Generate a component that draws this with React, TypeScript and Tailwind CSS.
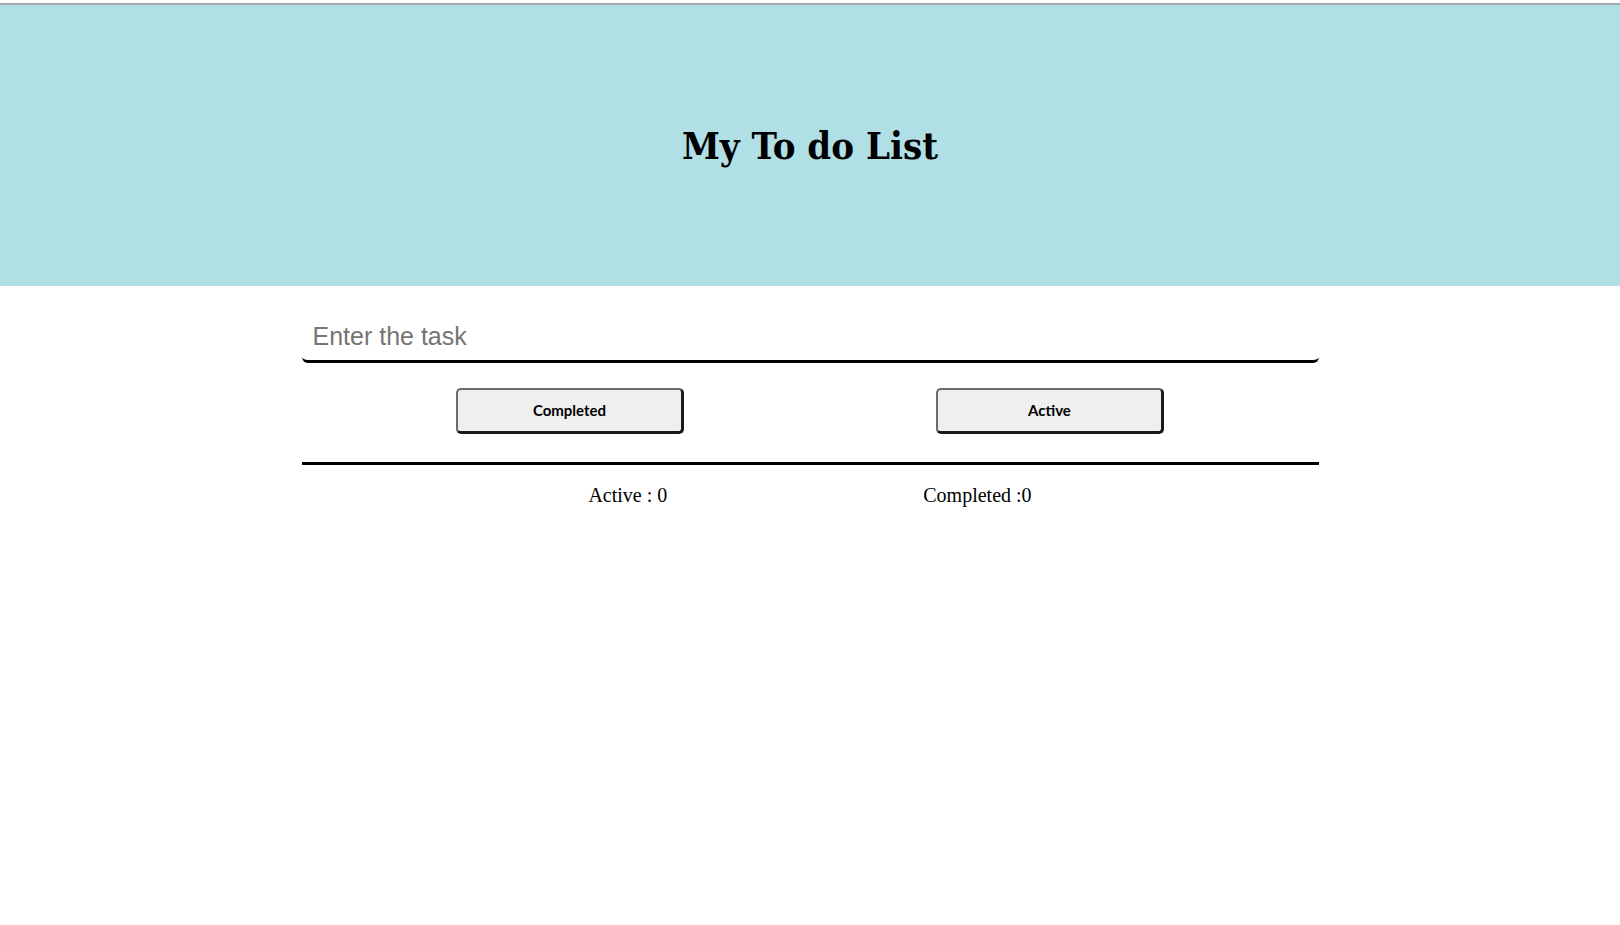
import React from "react";

export default function App() {
  return (
    <div className="min-h-[925px] w-full bg-white" style={{ fontFamily: '"Liberation Serif", serif' }}>
      <div className="h-[3px] bg-white" />
      <div className="h-[2px] bg-[#aaaaaa]" />
      <header className="flex h-[281px] items-center justify-center bg-[#b0dfe5]">
        <h1
          className="text-[38px] font-bold leading-none text-black font-stretch-condensed"
          style={{ fontFamily: '"DejaVu Serif", serif' }}
        >
          My To do List
        </h1>
      </header>
      <main className="mx-auto w-[1017px]">
        <input
          type="text"
          placeholder="Enter the task"
          className="mt-[14px] box-border h-[63px] w-full rounded-[6px] border-b-[3px] border-black pl-[11px] pt-3 text-[25px] text-black outline-none placeholder:text-[#757575]"
          style={{ fontFamily: '"Liberation Sans", Arial, sans-serif' }}
        />
        <div className="mt-[25px] flex justify-center gap-[252px]">
          {["Completed", "Active"].map((label) => (
            <button
              key={label}
              className="box-border flex h-[46px] w-[228px] items-center justify-center rounded-[5px] border-t-2 border-l-2 border-b-[3px] border-r-[3px] border-b-[#1a1a1a] border-l-[#6a6a6a] border-r-[#1a1a1a] border-t-[#6a6a6a] bg-[#efefef] text-[15px] font-bold text-black"
              style={{ fontFamily: 'Lato, "Open Sans", sans-serif' }}
            >
              {label}
            </button>
          ))}
        </div>
        <div className="mt-[28px] h-[3px] bg-black" />
        <div className="mt-[19px] flex justify-center gap-[256px] text-[20px] leading-[23px] text-black">
          <span>Active : 0</span>
          <span>Completed :0</span>
        </div>
      </main>
    </div>
  );
}
